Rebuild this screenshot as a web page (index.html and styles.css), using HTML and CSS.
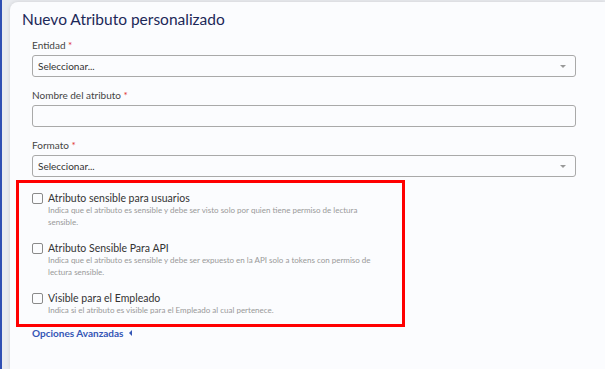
FILE: index.html
```html
<!DOCTYPE html>
<html lang="es">
<head>
    <meta charset="UTF-8">
    <meta name="viewport" content="width=device-width, initial-scale=1.0">
    <title>Nuevo Atributo personalizado</title>
    <link rel="stylesheet" href="styles.css">
</head>
<body>

    <div class="page">
        <div class="card">
            <h1>Nuevo Atributo personalizado</h1>

            <div class="field">
                <label>Entidad <span class="req">*</span></label>
                <div class="select">Seleccionar...<span class="caret"></span></div>
            </div>

            <div class="field">
                <label>Nombre del atributo <span class="req">*</span></label>
                <div class="input"></div>
            </div>

            <div class="field">
                <label>Formato <span class="req">*</span></label>
                <div class="select">Seleccionar...<span class="caret"></span></div>
            </div>

            <!-- Highlighted checks -->
            <div class="checks">
                <div class="check">
                    <span class="box"></span>
                    <div>
                        <div class="check-title">Atributo sensible para usuarios</div>
                        <div class="check-desc">Indica que el atributo es sensible y debe ser visto solo por quien tiene permiso de lectura sensible.</div>
                    </div>
                </div>
                <div class="check">
                    <span class="box"></span>
                    <div>
                        <div class="check-title">Atributo Sensible Para API</div>
                        <div class="check-desc">Indica que el atributo es sensible y debe ser expuesto en la API solo a tokens con permiso de lectura sensible.</div>
                    </div>
                </div>
                <div class="check">
                    <span class="box"></span>
                    <div>
                        <div class="check-title">Visible para el Empleado</div>
                        <div class="check-desc">Indica si el atributo es visible para el Empleado al cual pertenece.</div>
                    </div>
                </div>
            </div>

            <a class="advanced">Opciones Avanzadas <span class="tri"></span></a>
        </div>
    </div>

</body>
</html>
```

FILE: styles.css
```css
body {
    margin: 0;
    font-family: Lato, "Noto Sans", sans-serif;
    background: #e9ebef;
    overflow: hidden;
}
.page {
    height: 369px;
    border-left: 2px solid #2f4fb3; /* blue sidebar edge */
    padding: 2px 0 0 8px;
    box-sizing: border-box;
}
.card {
    height: 100%;
    background: #fbfcfe;
    border-top-left-radius: 8px;
    box-shadow: 0 0 4px rgba(0, 0, 0, 0.12);
    padding: 7px 0 0 12px;
    box-sizing: border-box;
}
h1 {
    margin: 0 0 9px;
    font-size: 15.5px;
    font-weight: normal;
    color: #1c2858;
    line-height: 20px;
}
.field { margin: 0 0 11px 10px; width: 544px; }
.field label {
    display: block;
    font-size: 10px;
    color: #444;
    line-height: 14px;
    margin-bottom: 3px;
}
.req { color: #e03030; }
.select, .input {
    height: 22px;
    border: 1px solid #a9a9a9;
    border-radius: 3px;
    box-sizing: border-box;
    font-size: 10px;
    color: #333;
    line-height: 20px;
    padding: 0 5px;
    display: flex;
    justify-content: space-between;
    align-items: center;
}
.caret {
    border-left: 3px solid transparent;
    border-right: 3px solid transparent;
    border-top: 3px solid #999;
    margin-right: 4px;
}

/* Red highlight box */
.checks {
    width: 370px;
    margin: -8px 0 0 -6px;
    border: 3px solid #ff0000;
    padding: 9px 0 7px 13px;
    display: flex;
    flex-direction: column;
    gap: 14px;
}
.check { display: flex; gap: 5px; }
.box {
    width: 11px;
    height: 11px;
    border: 1px solid #8a8a8a;
    border-radius: 2px;
    box-sizing: border-box;
    margin-top: 1px;
    flex: none;
}
.check-title { font-size: 10.5px; color: #333; line-height: 13px; }
.check-desc { font-size: 8px; color: #999; line-height: 11.5px; max-width: 332px; }

.advanced {
    display: flex;
    width: max-content;
    align-items: center;
    gap: 6px;
    margin: 0 0 0 10px;
    font-size: 10px;
    line-height: 12px;
    font-weight: bold;
    color: #3456b6;
}
.tri {
    border-top: 3px solid transparent;
    border-bottom: 3px solid transparent;
    border-right: 3px solid #3456b6;
}
```
